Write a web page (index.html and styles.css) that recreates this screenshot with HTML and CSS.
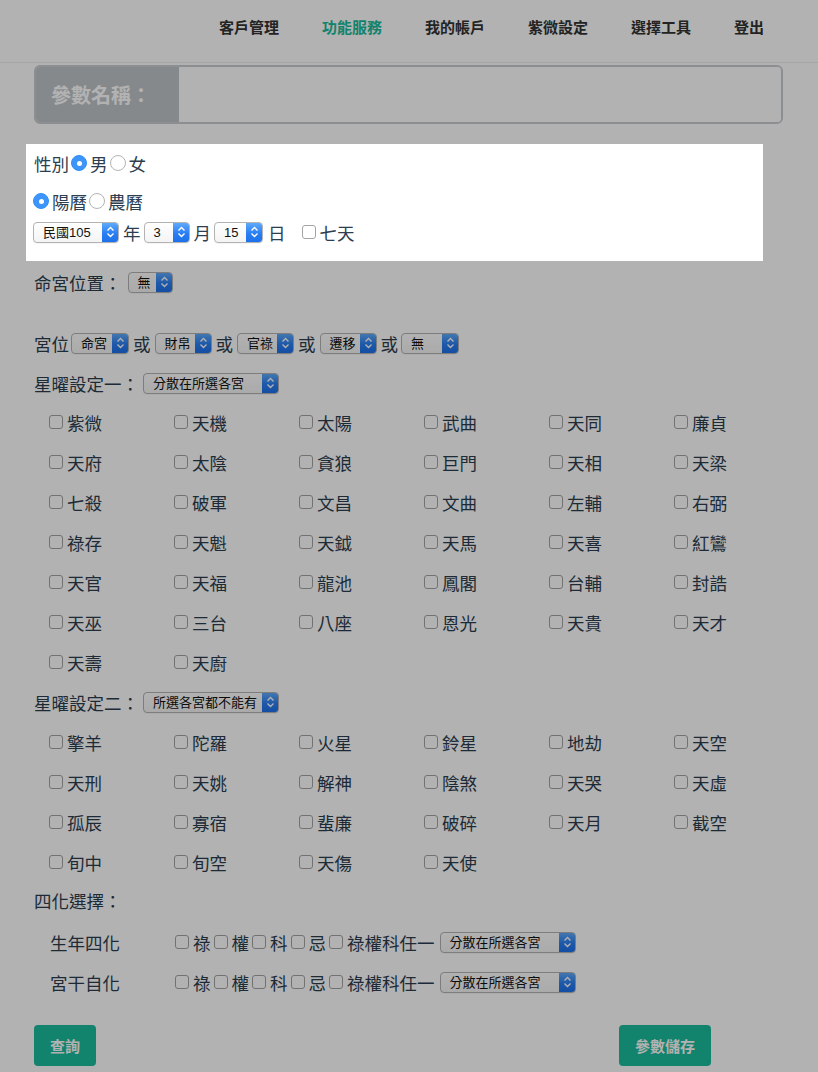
FILE: index.html
```html
<!DOCTYPE html>
<html lang="zh-Hant">
<head>
<meta charset="utf-8">
<title>紫微設定</title>
<link rel="stylesheet" href="styles.css">
</head>
<body>
<nav class="nav">
  <a class="nav-item">客戶管理</a>
  <a class="nav-item active">功能服務</a>
  <a class="nav-item">我的帳戶</a>
  <a class="nav-item">紫微設定</a>
  <a class="nav-item">選擇工具</a>
  <a class="nav-item">登出</a>
</nav>

<main class="container">
  <div class="name-group">
    <span class="name-addon">參數名稱：</span>
    <span class="name-input"></span>
  </div>

  <section class="hl">
    <div class="hl-row">性別<span class="radio on"></span>男<span class="radio"></span>女</div>
    <div class="hl-row r2"><span class="radio on first"></span>陽曆<span class="radio"></span>農曆</div>
    <div class="hl-row r3">
      <span class="sel w86 gm1"><span class="sel-text">民國105</span><span class="sel-btn"><svg viewBox="0 0 17 20" width="17" height="20"><path d="M5.5 8.5 L8.5 5.5 L11.5 8.5 M5.5 11.5 L8.5 14.5 L11.5 11.5" fill="none" stroke="#fff" stroke-width="1.4"/></svg></span></span>
      <span class="t g4">年</span>
      <span class="sel w46 g3"><span class="sel-text">3</span><span class="sel-btn"><svg viewBox="0 0 17 20" width="17" height="20"><path d="M5.5 8.5 L8.5 5.5 L11.5 8.5 M5.5 11.5 L8.5 14.5 L11.5 11.5" fill="none" stroke="#fff" stroke-width="1.4"/></svg></span></span>
      <span class="t g4">月</span>
      <span class="sel w49 g3"><span class="sel-text">15</span><span class="sel-btn"><svg viewBox="0 0 17 20" width="17" height="20"><path d="M5.5 8.5 L8.5 5.5 L11.5 8.5 M5.5 11.5 L8.5 14.5 L11.5 11.5" fill="none" stroke="#fff" stroke-width="1.4"/></svg></span></span>
      <span class="t g5">日</span>
      <span class="cb g16"></span><span class="t g4">七天</span>
    </div>
  </section>

  <div class="row r-ming">命宮位置：<span class="sel w45 g6"><span class="sel-text">無</span><span class="sel-btn"><svg viewBox="0 0 17 20" width="17" height="20"><path d="M5.5 8.5 L8.5 5.5 L11.5 8.5 M5.5 11.5 L8.5 14.5 L11.5 11.5" fill="none" stroke="#fff" stroke-width="1.4"/></svg></span></span></div>

  <div class="row r-gong">
    <span class="t">宮位</span>
    <span class="sel w58 g2"><span class="sel-text">命宮</span><span class="sel-btn"><svg viewBox="0 0 17 20" width="17" height="20"><path d="M5.5 8.5 L8.5 5.5 L11.5 8.5 M5.5 11.5 L8.5 14.5 L11.5 11.5" fill="none" stroke="#fff" stroke-width="1.4"/></svg></span></span>
    <span class="t g4">或</span>
    <span class="sel w57 g4"><span class="sel-text">財帛</span><span class="sel-btn"><svg viewBox="0 0 17 20" width="17" height="20"><path d="M5.5 8.5 L8.5 5.5 L11.5 8.5 M5.5 11.5 L8.5 14.5 L11.5 11.5" fill="none" stroke="#fff" stroke-width="1.4"/></svg></span></span>
    <span class="t g4">或</span>
    <span class="sel w57 g4"><span class="sel-text">官祿</span><span class="sel-btn"><svg viewBox="0 0 17 20" width="17" height="20"><path d="M5.5 8.5 L8.5 5.5 L11.5 8.5 M5.5 11.5 L8.5 14.5 L11.5 11.5" fill="none" stroke="#fff" stroke-width="1.4"/></svg></span></span>
    <span class="t g4">或</span>
    <span class="sel w57 g4"><span class="sel-text">遷移</span><span class="sel-btn"><svg viewBox="0 0 17 20" width="17" height="20"><path d="M5.5 8.5 L8.5 5.5 L11.5 8.5 M5.5 11.5 L8.5 14.5 L11.5 11.5" fill="none" stroke="#fff" stroke-width="1.4"/></svg></span></span>
    <span class="t g4">或</span>
    <span class="sel w58 g3"><span class="sel-text">無</span><span class="sel-btn"><svg viewBox="0 0 17 20" width="17" height="20"><path d="M5.5 8.5 L8.5 5.5 L11.5 8.5 M5.5 11.5 L8.5 14.5 L11.5 11.5" fill="none" stroke="#fff" stroke-width="1.4"/></svg></span></span>
  </div>

  <div class="row">星曜設定一：<span class="sel w136 g4"><span class="sel-text">分散在所選各宮</span><span class="sel-btn"><svg viewBox="0 0 17 20" width="17" height="20"><path d="M5.5 8.5 L8.5 5.5 L11.5 8.5 M5.5 11.5 L8.5 14.5 L11.5 11.5" fill="none" stroke="#fff" stroke-width="1.4"/></svg></span></span></div>

  <div class="grid grid-first">
    <label class="item"><span class="cb"></span>紫微</label>
    <label class="item"><span class="cb"></span>天機</label>
    <label class="item"><span class="cb"></span>太陽</label>
    <label class="item"><span class="cb"></span>武曲</label>
    <label class="item"><span class="cb"></span>天同</label>
    <label class="item"><span class="cb"></span>廉貞</label>
    <label class="item"><span class="cb"></span>天府</label>
    <label class="item"><span class="cb"></span>太陰</label>
    <label class="item"><span class="cb"></span>貪狼</label>
    <label class="item"><span class="cb"></span>巨門</label>
    <label class="item"><span class="cb"></span>天相</label>
    <label class="item"><span class="cb"></span>天梁</label>
    <label class="item"><span class="cb"></span>七殺</label>
    <label class="item"><span class="cb"></span>破軍</label>
    <label class="item"><span class="cb"></span>文昌</label>
    <label class="item"><span class="cb"></span>文曲</label>
    <label class="item"><span class="cb"></span>左輔</label>
    <label class="item"><span class="cb"></span>右弼</label>
    <label class="item"><span class="cb"></span>祿存</label>
    <label class="item"><span class="cb"></span>天魁</label>
    <label class="item"><span class="cb"></span>天鉞</label>
    <label class="item"><span class="cb"></span>天馬</label>
    <label class="item"><span class="cb"></span>天喜</label>
    <label class="item"><span class="cb"></span>紅鸞</label>
    <label class="item"><span class="cb"></span>天官</label>
    <label class="item"><span class="cb"></span>天福</label>
    <label class="item"><span class="cb"></span>龍池</label>
    <label class="item"><span class="cb"></span>鳳閣</label>
    <label class="item"><span class="cb"></span>台輔</label>
    <label class="item"><span class="cb"></span>封誥</label>
    <label class="item"><span class="cb"></span>天巫</label>
    <label class="item"><span class="cb"></span>三台</label>
    <label class="item"><span class="cb"></span>八座</label>
    <label class="item"><span class="cb"></span>恩光</label>
    <label class="item"><span class="cb"></span>天貴</label>
    <label class="item"><span class="cb"></span>天才</label>
    <label class="item"><span class="cb"></span>天壽</label>
    <label class="item"><span class="cb"></span>天廚</label>
  </div>

  <div class="row">星曜設定二：<span class="sel w136 g4"><span class="sel-text">所選各宮都不能有</span><span class="sel-btn"><svg viewBox="0 0 17 20" width="17" height="20"><path d="M5.5 8.5 L8.5 5.5 L11.5 8.5 M5.5 11.5 L8.5 14.5 L11.5 11.5" fill="none" stroke="#fff" stroke-width="1.4"/></svg></span></span></div>

  <div class="grid">
    <label class="item"><span class="cb"></span>擎羊</label>
    <label class="item"><span class="cb"></span>陀羅</label>
    <label class="item"><span class="cb"></span>火星</label>
    <label class="item"><span class="cb"></span>鈴星</label>
    <label class="item"><span class="cb"></span>地劫</label>
    <label class="item"><span class="cb"></span>天空</label>
    <label class="item"><span class="cb"></span>天刑</label>
    <label class="item"><span class="cb"></span>天姚</label>
    <label class="item"><span class="cb"></span>解神</label>
    <label class="item"><span class="cb"></span>陰煞</label>
    <label class="item"><span class="cb"></span>天哭</label>
    <label class="item"><span class="cb"></span>天虛</label>
    <label class="item"><span class="cb"></span>孤辰</label>
    <label class="item"><span class="cb"></span>寡宿</label>
    <label class="item"><span class="cb"></span>蜚廉</label>
    <label class="item"><span class="cb"></span>破碎</label>
    <label class="item"><span class="cb"></span>天月</label>
    <label class="item"><span class="cb"></span>截空</label>
    <label class="item"><span class="cb"></span>旬中</label>
    <label class="item"><span class="cb"></span>旬空</label>
    <label class="item"><span class="cb"></span>天傷</label>
    <label class="item"><span class="cb"></span>天使</label>
  </div>

  <div class="row r-sihua-title">四化選擇：</div>

  <div class="row sihua sihua-first">
    <span class="sihua-label">生年四化</span>
    <span class="cb"></span><span class="t g4">祿</span>
    <span class="cb g3"></span><span class="t g4">權</span>
    <span class="cb g3"></span><span class="t g4">科</span>
    <span class="cb g3"></span><span class="t g4">忌</span>
    <span class="cb g3"></span><span class="t g4">祿權科任一</span>
    <span class="sel w136 g5"><span class="sel-text">分散在所選各宮</span><span class="sel-btn"><svg viewBox="0 0 17 20" width="17" height="20"><path d="M5.5 8.5 L8.5 5.5 L11.5 8.5 M5.5 11.5 L8.5 14.5 L11.5 11.5" fill="none" stroke="#fff" stroke-width="1.4"/></svg></span></span>
  </div>
  <div class="row sihua">
    <span class="sihua-label">宮干自化</span>
    <span class="cb"></span><span class="t g4">祿</span>
    <span class="cb g3"></span><span class="t g4">權</span>
    <span class="cb g3"></span><span class="t g4">科</span>
    <span class="cb g3"></span><span class="t g4">忌</span>
    <span class="cb g3"></span><span class="t g4">祿權科任一</span>
    <span class="sel w136 g5"><span class="sel-text">分散在所選各宮</span><span class="sel-btn"><svg viewBox="0 0 17 20" width="17" height="20"><path d="M5.5 8.5 L8.5 5.5 L11.5 8.5 M5.5 11.5 L8.5 14.5 L11.5 11.5" fill="none" stroke="#fff" stroke-width="1.4"/></svg></span></span>
  </div>

  <div class="actions">
    <button class="btn">查詢</button>
    <button class="btn">參數儲存</button>
  </div>
</main>

<div class="overlay"></div>
</body>
</html>
```

FILE: styles.css
```css
* { box-sizing: border-box; }

html, body {
  margin: 0;
  padding: 0;
  background: #fff;
}

body {
  font-family: "Noto Sans CJK TC", "Noto Sans", sans-serif;
  font-size: 17.5px;
  color: #2c3e50;
  width: 818px;
  overflow: hidden;
}

/* ---------- nav ---------- */
.nav {
  height: 63px;
  border-bottom: 1px solid #eeeeee;
  display: flex;
  justify-content: flex-end;
  gap: 43px;
  padding: 17px 54px 0 0;
}

.nav-item {
  font-size: 15px;
  font-weight: bold;
  line-height: 20px;
  color: #333;
}

.nav-item.active { color: #1abc9c; }

/* ---------- main ---------- */
.container {
  padding: 0 35px 0 34px;
}

.name-group {
  margin-top: 2px;
  height: 59px;
  display: flex;
  border: 2px solid #c8cdd0;
  border-radius: 6px;
  overflow: hidden;
}

.name-addon {
  width: 143px;
  background: #bfc5c8;
  color: #fff;
  font-size: 20px;
  font-weight: bold;
  display: flex;
  align-items: center;
  padding-left: 15px;
}

.name-input {
  flex: 1;
  background: #fff;
}

/* highlighted block */
.hl {
  position: relative;
  z-index: 20;
  background: #fff;
  margin: 20px 0 0 -8px;
  width: 737px;
  padding: 6px 0 16px 8px;
}

.hl-row {
  height: 26px;
  display: flex;
  align-items: center;
}

.hl-row.r2 { margin-top: 12px; }
.hl-row.r3 { margin-top: 5px; }

.row {
  height: 40px;
  display: flex;
  align-items: center;
  white-space: nowrap;
}

.r-ming { margin-top: 1px; }
.r-gong { margin-top: 21px; }
.r-sihua-title { margin-top: -2px; }
.sihua-first { margin-top: 2px; }

.t { display: inline-block; }

.gm1 { margin-left: -1px; }
.g2 { margin-left: 2px; }
.g3 { margin-left: 3px; }
.g4 { margin-left: 4px; }
.g5 { margin-left: 5px; }
.g6 { margin-left: 6px; }
.g16 { margin-left: 16px; }

/* radios */
.radio {
  width: 16px;
  height: 16px;
  border-radius: 50%;
  border: 1px solid #b4b4b4;
  background: #fff;
  margin: 0 3px 0 2px;
  flex: none;
  position: relative;
}

.radio.on {
  border-color: #2f8ff8;
  background: #3d95fb;
}

.radio.on::after {
  content: "";
  position: absolute;
  left: 4.5px;
  top: 4.5px;
  width: 5px;
  height: 5px;
  border-radius: 50%;
  background: #fff;
}

.radio.first { margin-left: -1px; }

/* checkbox */
.cb {
  width: 14px;
  height: 14px;
  border: 1px solid #a4a4a4;
  border-radius: 3px;
  background: #fff;
  flex: none;
  display: inline-block;
}

/* select */
.sel {
  height: 21px;
  display: inline-flex;
  align-items: stretch;
  border: 1px solid #b3b3b3;
  border-radius: 4px;
  background: linear-gradient(#ffffff, #f4f4f4);
  overflow: hidden;
  flex: none;
  box-shadow: 0 1px 0 rgba(0,0,0,0.04);
}

.sel-text {
  flex: 1;
  font-family: "Liberation Sans", "Noto Sans CJK TC", sans-serif;
  font-size: 13px;
  color: #111;
  padding-left: 9px;
  line-height: 19px;
  white-space: nowrap;
  overflow: hidden;
}

.sel-btn {
  width: 17px;
  flex: none;
  background: linear-gradient(#63aefc, #2a7ef3 55%, #1c6fe9);
  display: flex;
  align-items: center;
  justify-content: center;
  margin: -1px -1px -1px 0;
}

.sel-btn svg { display: block; }

.w45 { width: 45px; }
.w46 { width: 46px; }
.w49 { width: 49px; }
.w57 { width: 57px; }
.w58 { width: 58px; }
.w86 { width: 86px; }
.w136 { width: 136px; }

/* grids */
.grid {
  display: grid;
  grid-template-columns: repeat(6, 125px);
  grid-auto-rows: 40px;
  padding-left: 15px;
}

.grid-first { margin-top: -1px; }

.item {
  display: flex;
  align-items: center;
  gap: 4px;
  white-space: nowrap;
}

/* 四化 */
.sihua-label {
  width: 141px;
  padding-left: 16px;
  flex: none;
}

/* actions */
.actions {
  display: grid;
  grid-template-columns: 585px auto;
  justify-items: start;
  margin-top: 23px;
}

.btn {
  height: 41px;
  padding: 0 16px;
  border: 0;
  border-radius: 4px;
  background: #1abc9c;
  color: #fff;
  font-family: "Noto Sans CJK TC", sans-serif;
  font-size: 15px;
  font-weight: bold;
}

/* guided tour backdrop */
.overlay {
  position: fixed;
  inset: 0;
  background: rgba(0, 0, 0, 0.3);
  z-index: 10;
}
```
